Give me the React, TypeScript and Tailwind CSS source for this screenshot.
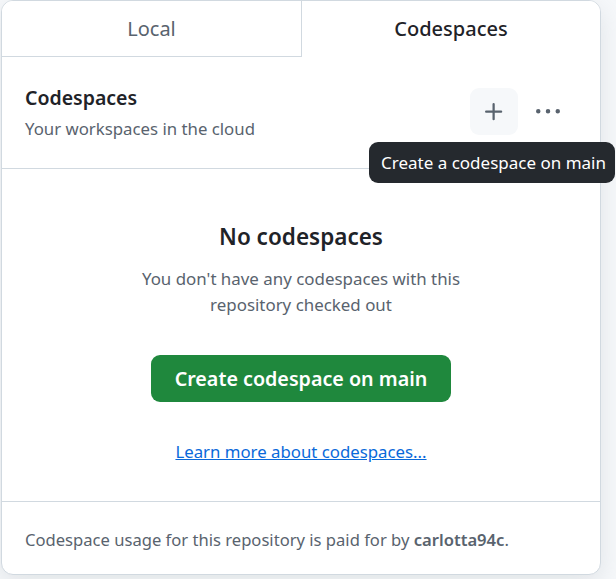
import React from 'react';

const font = { fontFamily: '"Noto Sans", "Open Sans", sans-serif' };

const PlusIcon: React.FC = () => (
    <svg width="24" height="24" viewBox="0 0 16 16" fill="#59636e">
        <path d="M7.75 2a.75.75 0 0 1 .75.75V7h4.25a.75.75 0 0 1 0 1.5H8.5v4.25a.75.75 0 0 1-1.5 0V8.5H2.75a.75.75 0 0 1 0-1.5H7V2.75A.75.75 0 0 1 7.75 2Z" />
    </svg>
);

const KebabIcon: React.FC = () => (
    <svg width="24" height="24" viewBox="0 0 16 16" fill="#59636e">
        <path d="M8 9a1.5 1.5 0 1 0 0-3 1.5 1.5 0 0 0 0 3ZM1.5 9a1.5 1.5 0 1 0 0-3 1.5 1.5 0 0 0 0 3Zm13 0a1.5 1.5 0 1 0 0-3 1.5 1.5 0 0 0 0 3Z" />
    </svg>
);

const App: React.FC = () => {
    return (
        <div className="relative w-[616px] h-[579px] bg-[#f6f8fa] overflow-hidden" style={font}>
            <div className="ml-[1px] w-[600px] h-[575px] flex flex-col bg-white border border-[#d1d9e0] rounded-[12px] shadow-[0_8px_24px_rgba(140,149,159,0.2)] overflow-hidden">
                {/* tabs */}
                <div className="flex h-[56px] shrink-0">
                    <button className="w-[300px] h-full flex items-center justify-center text-[20px] text-[#59636e] bg-white border-b border-r border-[#d1d9e0]">
                        Local
                    </button>
                    <button className="flex-1 h-full flex items-center justify-center text-[20px] font-medium text-[#1f2328] bg-white">
                        Codespaces
                    </button>
                </div>

                {/* header */}
                <div className="h-[112px] shrink-0 flex items-center justify-between pl-[23px] pr-[28px] border-b border-[#d1d9e0]">
                    <div className="flex flex-col">
                        <h2 className="text-[19.5px] leading-[30px] font-semibold text-[#1f2328]">Codespaces</h2>
                        <p className="mt-[3px] text-[16.8px] leading-[26px] text-[#59636e]">Your workspaces in the cloud</p>
                    </div>
                    <div className="flex items-center gap-[6px] -mt-[2px]">
                        <button className="w-[48px] h-[47px] flex items-center justify-center rounded-[9px] bg-[#f6f8fa]">
                            <PlusIcon />
                        </button>
                        <button className="w-[48px] h-[47px] flex items-center justify-center rounded-[9px]">
                            <KebabIcon />
                        </button>
                    </div>
                </div>

                {/* empty state */}
                <div className="h-[333px] shrink-0 flex flex-col items-center pt-[52px] border-b border-[#d1d9e0]">
                    <h3 className="text-[22.5px] leading-[32px] font-semibold text-[#1f2328]">No codespaces</h3>
                    <p className="mt-[13px] w-[340px] text-center text-[16.9px] leading-[26px] text-[#59636e]">
                        You don't have any codespaces with this repository checked out
                    </p>
                    <button className="mt-[37px] w-[300px] h-[47px] rounded-[9px] bg-[#1f883d] text-white text-[19.7px] font-semibold">
                        Create codespace on main
                    </button>
                    <a href="#" className="mt-[37px] text-[16.8px] leading-[26px] text-[#0969da] underline">
                        Learn more about codespaces...
                    </a>
                </div>

                {/* footer */}
                <div className="flex-1 flex items-center px-[23px] pt-[4px]">
                    <p className="text-[16.6px] text-[#59636e]">
                        Codespace usage for this repository is paid for by <span className="font-semibold">carlotta94c</span>.
                    </p>
                </div>
            </div>

            {/* tooltip */}
            <div className="absolute left-[369px] top-[142px] w-[246px] h-[41px] flex items-center pl-[12px] rounded-[9px] bg-[#25292e] text-white text-[17px] whitespace-nowrap">
                Create a codespace on main
            </div>
        </div>
    );
};

export default App;
